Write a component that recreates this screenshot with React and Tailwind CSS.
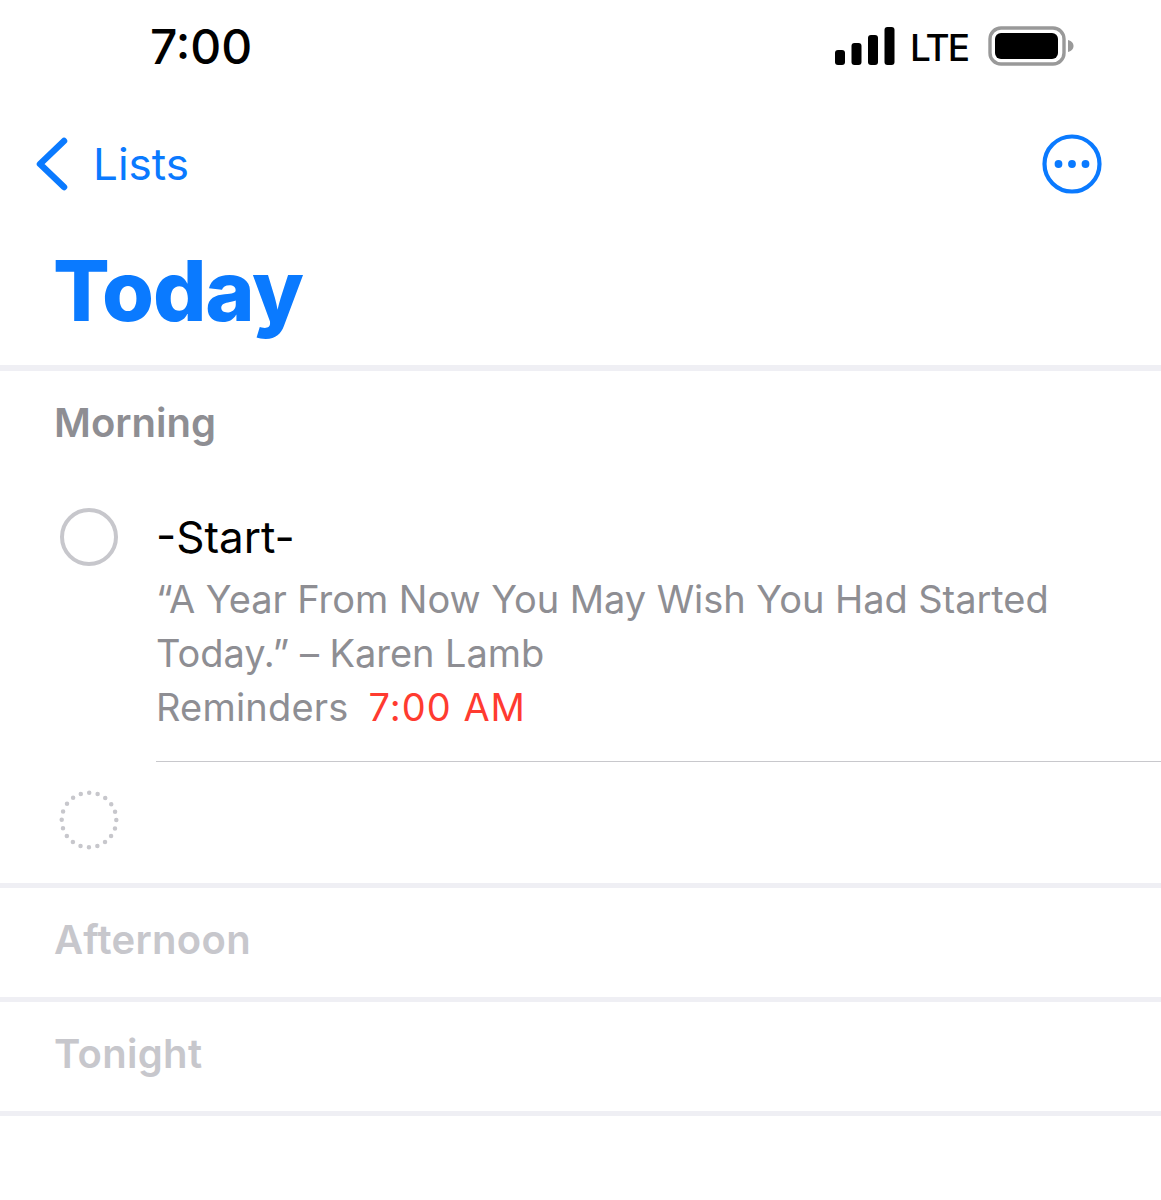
const font = { fontFamily: 'Inter, "Noto Sans", sans-serif' };

function StatusIcons() {
  return (
    <div className="flex items-center">
      <svg width="60" height="38" viewBox="0 0 60 38" className="block">
        <rect x="0" y="23" width="10" height="15" rx="3" fill="#000" />
        <rect x="16.5" y="16" width="10" height="22" rx="3" fill="#000" />
        <rect x="33" y="8" width="10" height="30" rx="3" fill="#000" />
        <rect x="49.5" y="0" width="10" height="38" rx="3" fill="#000" />
      </svg>
      <span className="ml-[15px] pt-[3px] text-[37px] leading-none font-medium text-black tracking-[-2px]">LTE</span>
      <svg width="86" height="40" viewBox="0 0 86 40" className="block ml-[20px]">
        <rect x="2" y="2" width="74" height="36" rx="11" fill="none" stroke="#999999" strokeWidth="3.4" />
        <rect x="7" y="7" width="63" height="26" rx="6" fill="#000" />
        <path d="M80 14 C84 15 85.5 17.5 85.5 20 C85.5 22.5 84 25 80 26 Z" fill="#999999" />
      </svg>
    </div>
  );
}

function Section({ title }) {
  return (
    <div className="h-[114px] border-b-[5px] border-[#efeff4] pl-[54px] pt-[27px]">
      <div className="text-[40px] leading-[50px] font-semibold text-[#c7c7cc] tracking-[0.3px]">{title}</div>
    </div>
  );
}

export default function App() {
  return (
    <div style={font} className="w-[1161px] h-[1200px] bg-white overflow-hidden">
      <div className="h-[92px] flex items-center justify-between pl-[150px] pr-[87px]">
        <span className="pt-[2px] text-[48px] leading-none font-medium text-black">7:00</span>
        <StatusIcons />
      </div>

      <div className="h-[144px] flex items-start justify-between pl-[36px] pr-[59px] pt-[42px]">
        <div className="flex items-center mt-[3px] text-[#0a7aff]">
          <svg width="32" height="54" viewBox="0 0 32 54" fill="none" className="block">
            <path d="M28 4 L4 27 L28 50" stroke="#0a7aff" strokeWidth="6.5" strokeLinecap="round" strokeLinejoin="round" />
          </svg>
          <span className="ml-[25px] text-[44px] leading-none font-normal">Lists</span>
        </div>
        <svg width="60" height="60" viewBox="0 0 60 60" className="block">
          <circle cx="30" cy="30" r="27.5" fill="none" stroke="#0a7aff" strokeWidth="4.2" />
          <circle cx="16.5" cy="30" r="3.9" fill="#0a7aff" />
          <circle cx="30" cy="30" r="3.9" fill="#0a7aff" />
          <circle cx="43.5" cy="30" r="3.9" fill="#0a7aff" />
        </svg>
      </div>

      <div className="h-[135px] border-b-[6px] border-[#efeff4] pl-[53px]">
        <div className="text-[84px] leading-[110px] font-extrabold text-[#0a7aff] tracking-[-1.2px]">Today</div>
      </div>

      <div className="h-[517px] border-b-[5px] border-[#efeff4]">
        <div className="pl-[54px] pt-[27px] text-[40px] leading-[50px] font-semibold text-[#8e8e93]">Morning</div>
        <div className="flex mt-[60px]">
          <div className="w-[156px] shrink-0 pl-[60px]">
            <div className="w-[58px] h-[58px] rounded-full border-[4px] border-[#c7c7cc]" />
          </div>
          <div className="flex-1 -mt-[2px]">
            <div className="text-[44px] leading-[62px] text-black">-Start-</div>
            <div className="mt-[4px] text-[38px] leading-[54px] text-[#8e8e93] w-[960px] tracking-[-0.05px]">
              “A Year From Now You May Wish You Had Started Today.” – Karen Lamb
            </div>
            <div className="text-[38px] leading-[54px] text-[#8e8e93]">
              <span className="tracking-[0.2px]">Reminders</span><span className="ml-[20px] text-[#ff3b30] tracking-[1px]">7:00 AM</span>
            </div>
            <div className="mt-[27px] h-px bg-[#c8c8cc]" />
          </div>
        </div>
        <div className="pl-[59px] mt-[28px]">
          <svg width="60" height="60" viewBox="0 0 60 60" className="block">
            <circle cx="30" cy="30" r="27.3" fill="none" stroke="#c7c7cc" strokeWidth="4.5" strokeLinecap="round" strokeDasharray="0 8.5765" />
          </svg>
        </div>
      </div>

      <Section title="Afternoon" />
      <Section title="Tonight" />
    </div>
  );
}
